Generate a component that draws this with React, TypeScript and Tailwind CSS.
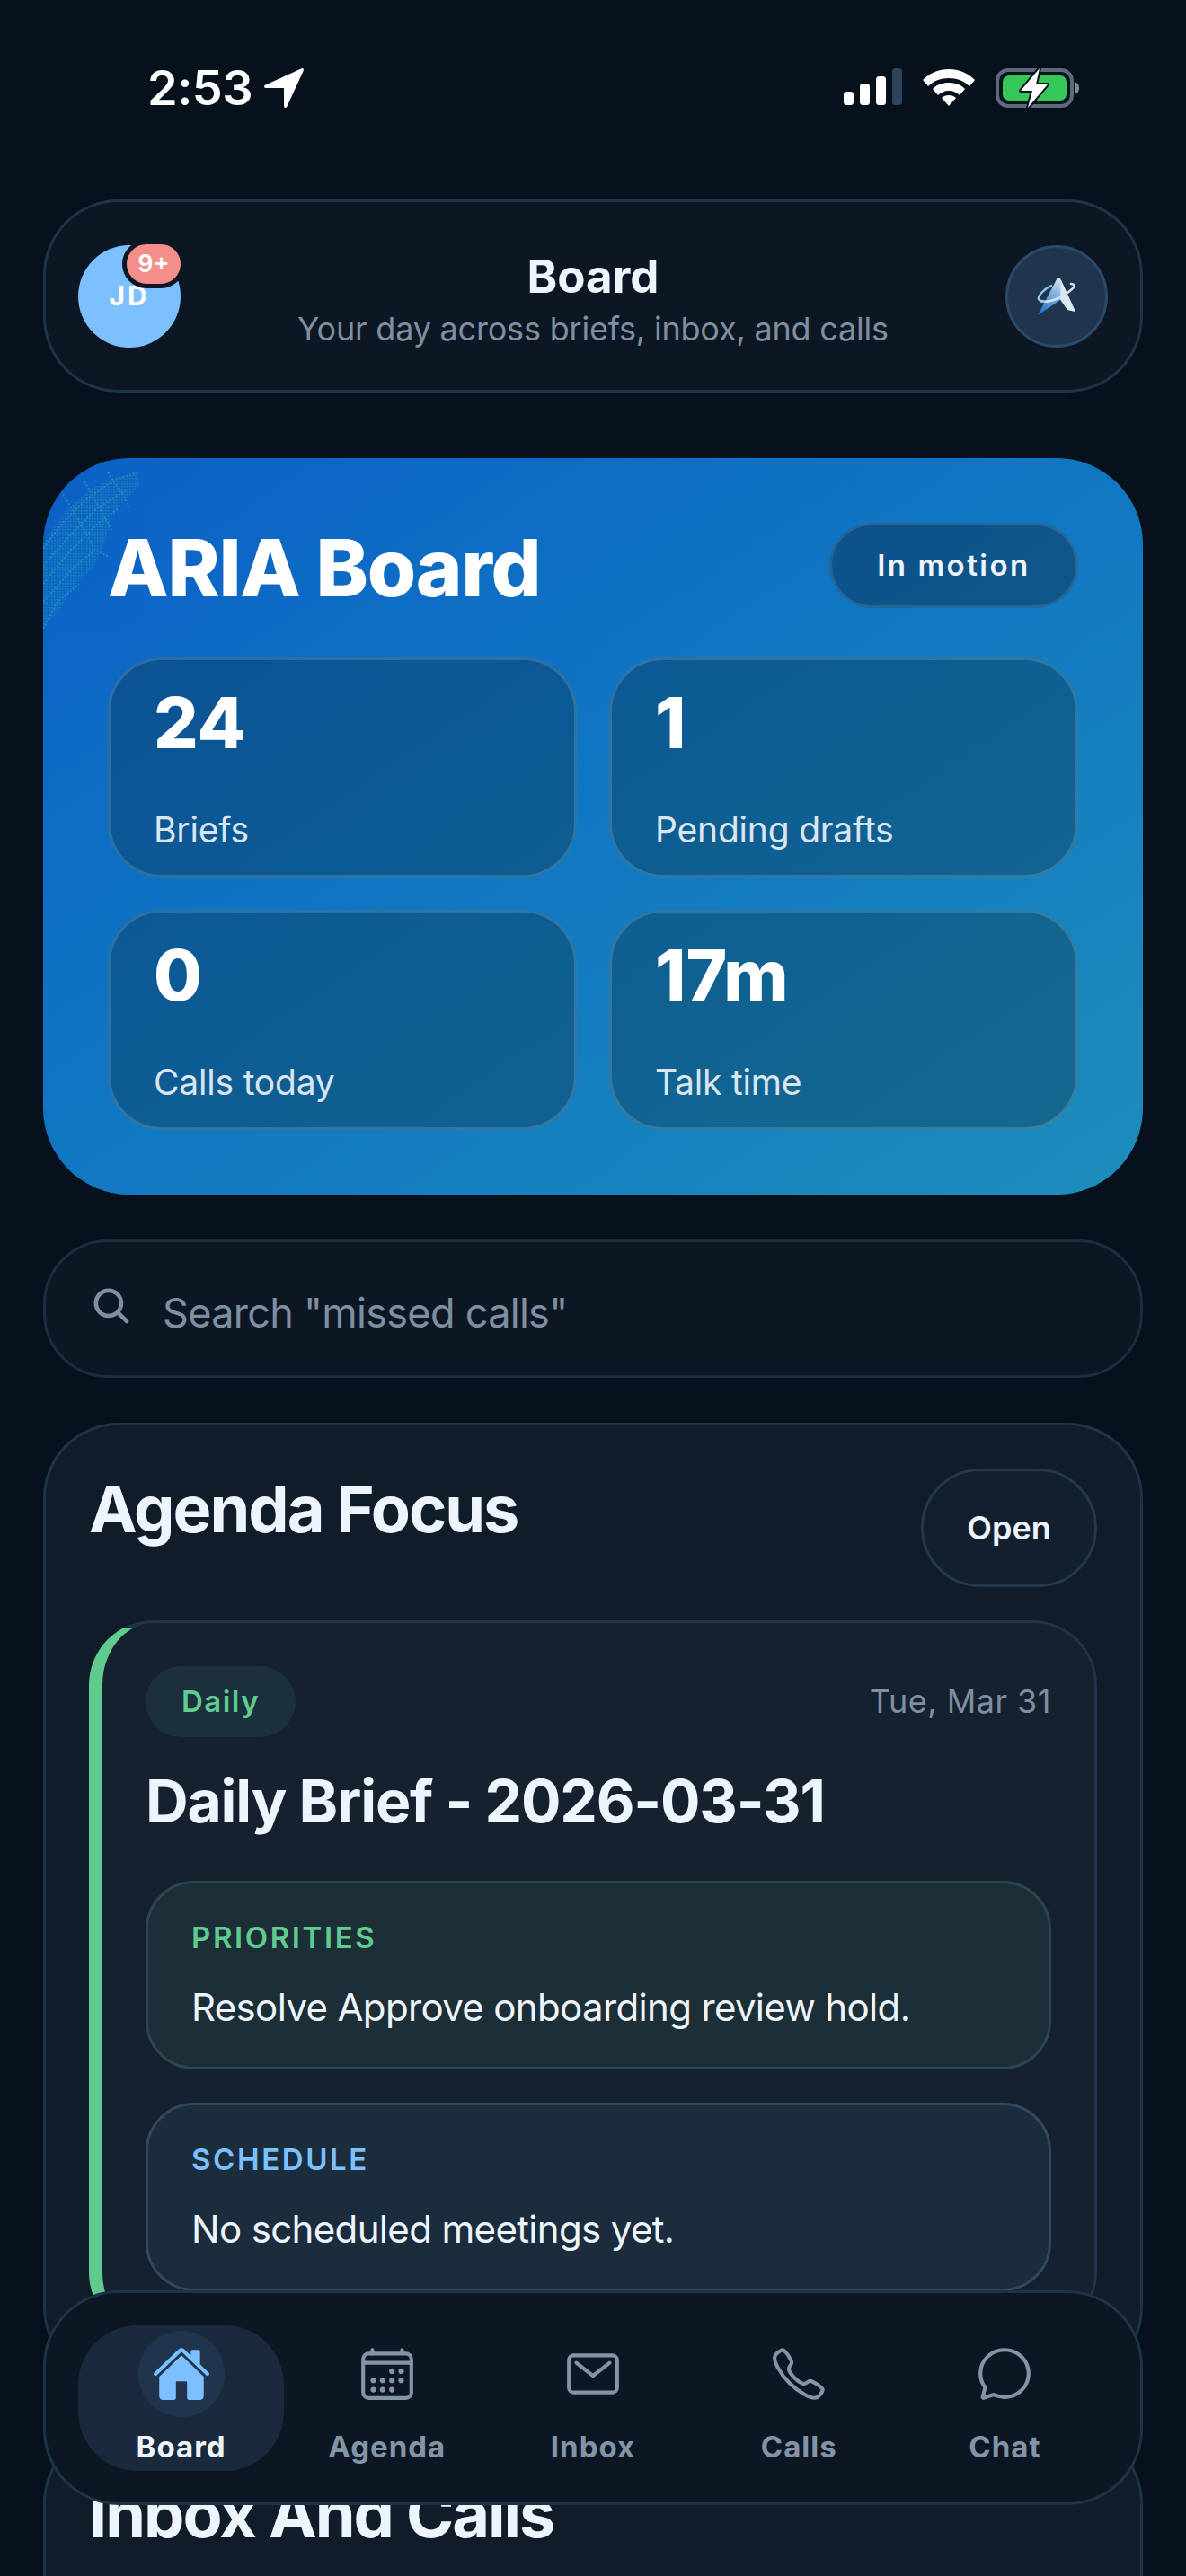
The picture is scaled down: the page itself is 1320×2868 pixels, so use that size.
import { IoCalendarOutline, IoCallOutline, IoChatbubbleOutline, IoHome, IoMailOutline, IoNavigate, IoSearch } from "react-icons/io5";
import type { IconType } from "react-icons";

type NavItem = { label: string; icon: IconType; active?: boolean };

const navItems: NavItem[] = [
  { label: "Board", icon: IoHome, active: true },
  { label: "Agenda", icon: IoCalendarOutline },
  { label: "Inbox", icon: IoMailOutline },
  { label: "Calls", icon: IoCallOutline },
  { label: "Chat", icon: IoChatbubbleOutline },
];

const stats = [
  { value: "24", label: "Briefs" },
  { value: "1", label: "Pending drafts" },
  { value: "0", label: "Calls today" },
  { value: "17m", label: "Talk time" },
];

function StatusBar() {
  return (
    <div className="flex h-[222px] items-start justify-between pl-[164px] pr-[118px] pt-[75px]">
      <div className="-mt-[4px] flex items-center gap-[8px] text-white">
        <span className="text-[54px] font-semibold leading-[44px] tracking-[-0.5px]">2:53</span>
        <IoNavigate className="h-[54px] w-[54px]" />
      </div>
      <div className="flex items-start gap-[23px]">
        <svg width="65" height="42" viewBox="0 0 65 42" className="mt-[1px]">
          <rect x="0" y="26" width="11" height="15" rx="3.5" fill="#fff" />
          <rect x="18" y="17" width="11" height="24" rx="3.5" fill="#fff" />
          <rect x="36" y="9" width="11" height="32" rx="3.5" fill="#fff" />
          <rect x="54" y="0" width="11" height="41" rx="3.5" fill="#2d445c" />
        </svg>
        <svg width="58" height="42" viewBox="0 0 58 42" className="mt-[2px]">
          <path d="M29 0C18 0 8 4 0 12l6 7c6-6 14-9 23-9s17 3 23 9l6-7C50 4 40 0 29 0Z" fill="#fff" />
          <path d="M29 15c-7 0-13 2-18 7l6 7c3-3 7-5 12-5s9 2 12 5l6-7c-5-5-11-7-18-7Z" fill="#fff" />
          <path d="M29 29c-3 0-6 1-8 3l8 9 8-9c-2-2-5-3-8-3Z" fill="#fff" />
        </svg>
        <svg width="94" height="46" viewBox="0 0 94 46">
          <rect x="2" y="3" width="83" height="40" rx="12" fill="none" stroke="#5b6b7b" strokeWidth="4" />
          <rect x="8" y="9" width="71" height="28" rx="7" fill="#34c759" />
          <path d="M88 16c3 1 5 3 5 7s-2 6-5 7Z" fill="#7b8a99" />
          <path d="M49 1 28 26h13l-5 19 22-26H45Z" fill="#fff" stroke="#07111b" strokeWidth="4" strokeLinejoin="round" paintOrder="stroke" />
        </svg>
      </div>
    </div>
  );
}

function AppLogo() {
  return (
    <svg width="46" height="44" viewBox="0 0 46 44">
      <defs>
        <linearGradient id="logoA" x1="0.7" y1="0" x2="0.2" y2="1">
          <stop offset="0" stopColor="#e8eef4" />
          <stop offset="0.45" stopColor="#7fb2e0" />
          <stop offset="1" stopColor="#1f74c8" />
        </linearGradient>
      </defs>
      <path d="M24 1c2 0 3 1 4 3l16 35-9-2-8-11-25 17Z" fill="url(#logoA)" />
      <path d="M28 4 44 39l-9-2-8-12Z" fill="#dfe7ee" />
      <path d="M6 27c8 3 24-4 34-13 4-3 3-6-1-6" fill="none" stroke="#cfe3f3" strokeWidth="2.5" strokeLinecap="round" />
      <path d="M17 10C9 14 2 21 3 25c1 2 3 3 6 3" fill="none" stroke="#8ec6f2" strokeWidth="2.5" strokeLinecap="round" />
    </svg>
  );
}

function Header() {
  return (
    <div className="mx-[48px] flex h-[215px] items-center rounded-[84px] border-[3px] border-[#1e3248] bg-[#0c1723] px-[36px]">
      <div className="relative flex h-[114px] w-[114px] shrink-0 items-center justify-center rounded-full bg-[#7cc0ff] text-[30px] font-bold tracking-[3px] text-white">
        JD
        <span className="absolute left-[49px] top-[-6px] flex h-[54px] w-[70px] items-center justify-center rounded-[27px] border-[5px] border-[#0c1723] bg-[#f48e8a] text-[27px] font-semibold leading-none tracking-normal text-white">
          9+
        </span>
      </div>
      <div className="flex-1 pt-[6px] text-center">
        <div className="text-[51px] font-bold leading-[62px] text-[#eef4fb]">Board</div>
        <div className="mt-[5px] text-[36px] leading-[44px] tracking-[-0.2px] text-[#7f8ea0]">Your day across briefs, inbox, and calls</div>
      </div>
      <div className="flex h-[114px] w-[114px] shrink-0 items-center justify-center rounded-full border-[3px] border-[#294a6b] bg-[#20354d]">
        <AppLogo />
      </div>
    </div>
  );
}

function Hero() {
  return (
    <div className="relative mx-[48px] mt-[73px] overflow-hidden rounded-[96px] bg-gradient-to-br from-[#0d60c6] to-[#1e8dbc] px-[72px] pb-[72px] pt-[72px]">
      {/* foliage texture in the corner */}
      <svg width="125" height="180" viewBox="0 0 125 180" className="absolute left-0 top-[10px]" fill="none" stroke="#2fa8b0" strokeWidth="2" strokeDasharray="2 2" opacity="0.6">
        <defs>
          <pattern id="dither" width="3" height="3" patternUnits="userSpaceOnUse">
            <rect width="1.5" height="1.5" fill="#2fb3ad" />
          </pattern>
        </defs>
        <path d="M0 85 24 50 56 22 104 4 108 20 84 44 76 60 68 84 56 112 36 130 18 160 0 178Z" fill="url(#dither)" stroke="none" opacity="0.6" />
        <path d="M0 90 22 62 48 36 80 14 108 6" />
        <path d="M0 110 30 76 60 46 92 26" />
        <path d="M0 130 28 96 62 62 84 46" />
        <path d="M0 150 34 112 58 92 74 100" />
        <path d="M22 30 40 60 56 88" />
        <path d="M46 16 62 44 76 70" />
        <path d="M72 6 88 30 96 44" />
        <path d="M0 180 16 150 40 130" />
      </svg>
      <div className="relative flex h-[95px] items-start justify-between">
        <h1 className="text-[88px] font-extrabold leading-[101px] tracking-[-1.3px] text-white">ARIA Board</h1>
        <div className="flex h-[95px] w-[277px] items-center justify-center rounded-full border-[3px] border-white/10 bg-[#0a2a4a]/45 text-[33px] font-semibold tracking-[2.5px] text-[#eef4fb]">
          In motion
        </div>
      </div>
      <div className="relative mt-[55px] grid grid-cols-2 gap-[36px]">
        {stats.map((s) => (
          <div key={s.label} className="h-[245px] rounded-[60px] border-[3px] border-white/15 bg-[#0a2a3c]/35 px-[48px] pt-[25px]">
            <div className="text-[78px] font-extrabold leading-[90px] text-white">{s.value}</div>
            <div className="mt-[51px] text-[39px] leading-[46px] tracking-[-0.2px] text-[#dbe5f0]">{s.label}</div>
          </div>
        ))}
      </div>
    </div>
  );
}

function SearchBar() {
  return (
    <div className="mx-[48px] mt-[50px] flex h-[154px] items-center rounded-[72px] border-[3px] border-[#1b2d41] bg-[#0c1723] pl-[49px]">
      <IoSearch className="mb-[6px] h-[48px] w-[48px] text-[#7f8ea0]" />
      <span className="ml-[33px] mt-[9px] text-[45px] tracking-[-0.7px] text-[#7f8ea0]">Search "missed calls"</span>
    </div>
  );
}

function DetailBox({ title, text, className, titleClass }: { title: string; text: string; className: string; titleClass: string }) {
  return (
    <div className={`h-[210px] rounded-[54px] border-[3px] px-[48px] pt-[39px] ${className}`}>
      <div className={`text-[33px] font-semibold leading-[42px] tracking-[2.6px] ${titleClass}`}>{title}</div>
      <div className="mt-[31px] text-[42px] leading-[52px] tracking-[-0.65px] text-[#eef4fb]">{text}</div>
    </div>
  );
}

function AgendaFocus() {
  return (
    <div className="mx-[48px] mt-[50px] rounded-[84px] border-[3px] border-[#1e3248] bg-[#101c2a] p-[48px]">
      <div className="flex items-start justify-between">
        <h2 className="text-[72px] font-bold leading-[90px] tracking-[-2px] text-[#eef4fb]">Agenda Focus</h2>
        <div className="flex h-[132px] w-[196px] items-center justify-center rounded-[66px] border-[3px] border-[#24384d] bg-[#121f2e] text-[36px] font-semibold text-[#eef4fb]">
          Open
        </div>
      </div>
      <div className="mt-[37px] rounded-[72px] border-[3px] border-l-[15px] border-[#213448] border-l-[#5fcb8f] bg-[#15212f] py-[48px] pl-[48px] pr-[48px]">
        <div className="flex items-center justify-between">
          <span className="flex h-[79px] w-[167px] items-center justify-center rounded-full bg-[#1b2f3c] text-[33px] font-semibold tracking-[1.5px] text-[#5fcb8f]">
            Daily
          </span>
          <span className="mb-[2px] text-[36px] tracking-[0.5px] text-[#7f8ea0]">Tue, Mar 31</span>
        </div>
        <h3 className="mt-[31px] text-[66px] font-bold leading-[80px] tracking-[-1.2px] text-[#eef4fb]">Daily Brief - 2026-03-31</h3>
        <div className="mt-[49px] flex flex-col gap-[37px]">
          <DetailBox
            title="PRIORITIES"
            text="Resolve Approve onboarding review hold."
            className="border-[#2b4650] bg-[#1c2e36]"
            titleClass="text-[#5fcb8f]"
          />
          <DetailBox
            title="SCHEDULE"
            text="No scheduled meetings yet."
            className="border-[#31495f] bg-[#1b2c3d]"
            titleClass="text-[#7cc0ff]"
          />
        </div>
      </div>
    </div>
  );
}

function BottomNav() {
  return (
    <nav className="absolute bottom-[79px] left-[48px] right-[48px] flex h-[239px] items-center rounded-[84px] border-[3px] border-[#1e3248] bg-[#0c1723] px-[36px]">
      {navItems.map(({ label, icon: Icon, active }) => (
        <div
          key={label}
          className={`flex h-[162px] flex-1 flex-col items-center rounded-[66px] pt-[6px] ${active ? "bg-[#1a2a3c]" : ""}`}
        >
          <span className={`flex h-[96px] w-[96px] items-center justify-center rounded-full ${active ? "bg-[#20354d] text-[#7cc0ff]" : "text-[#8494a7]"}`}>
            <Icon className="h-[66px] w-[66px]" />
          </span>
          <span className={`mt-[12px] text-[33px] font-bold leading-[42px] tracking-[1px] ${active ? "text-[#eef4fb]" : "text-[#8494a7]"}`}>
            {label}
          </span>
        </div>
      ))}
    </nav>
  );
}

export default function App() {
  return (
    <div className="relative h-[2868px] w-[1320px] overflow-hidden bg-[#07111b] font-['Inter',sans-serif]">
      <StatusBar />
      <Header />
      <Hero />
      <SearchBar />
      <AgendaFocus />
      <div className="mx-[48px] mt-[50px] h-[400px] rounded-[84px] border-[3px] border-[#1e3248] bg-[#101c2a] p-[48px]">
        <h2 className="text-[72px] font-bold leading-[90px] tracking-[-2px] text-[#eef4fb]">Inbox And Calls</h2>
      </div>
      <BottomNav />
    </div>
  );
}
